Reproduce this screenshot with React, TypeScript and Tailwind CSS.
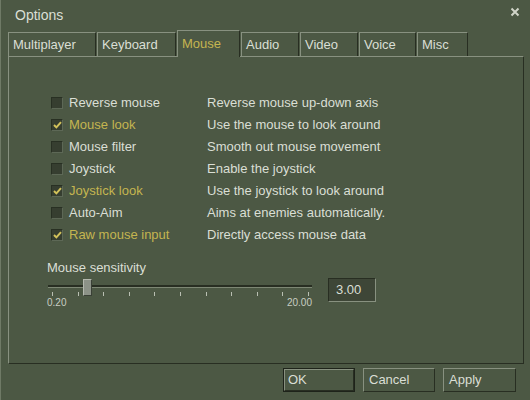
import React from "react";

const tabs = [
  { name: "Multiplayer", w: "w-[88px]" },
  { name: "Keyboard", w: "w-[79px]" },
  { name: "Mouse", w: "w-[63px]", active: true },
  { name: "Audio", w: "w-[58px]" },
  { name: "Video", w: "w-[58px]" },
  { name: "Voice", w: "w-[57px]" },
  { name: "Misc", w: "w-[51px]" },
];

const rows = [
  { label: "Reverse mouse", desc: "Reverse mouse up-down axis", on: false },
  { label: "Mouse look", desc: "Use the mouse to look around", on: true },
  { label: "Mouse filter", desc: "Smooth out mouse movement", on: false },
  { label: "Joystick", desc: "Enable the joystick", on: false },
  { label: "Joystick look", desc: "Use the joystick to look around", on: true },
  { label: "Auto-Aim", desc: "Aims at enemies automatically.", on: false },
  { label: "Raw mouse input", desc: "Directly access mouse data", on: true },
];

function Check({ on }: { on: boolean }) {
  return (
    <div className="w-[12px] h-[12px] shrink-0 bg-[#363e30] border border-t-[#283023] border-l-[#283023] border-r-[#5d6856] border-b-[#5d6856] flex items-center justify-center">
      {on && (
        <svg width="9" height="8" viewBox="0 0 9 8">
          <path d="M1 4 L3.4 6.4 L8 1.2" stroke="#d2c25a" strokeWidth="2" fill="none" />
        </svg>
      )}
    </div>
  );
}

export default function App() {
  const ticks = Array.from({ length: 11 });
  return (
    <div
      className="w-[530px] h-[400px] bg-[#4c5844] flex flex-col text-[#dadfd5] border-l border-l-[#6f7a66] overflow-hidden"
      style={{ fontFamily: '"Liberation Sans", Arial, sans-serif' }}
    >
      <div className="h-[30px] flex items-center justify-between pl-[14px] pr-[10px]">
        <span className="text-[14px] leading-none">Options</span>
        <svg width="10" height="10" viewBox="0 0 10 10" className="mb-[6px]">
          <path d="M1.5 1.5 L8.5 8.5 M8.5 1.5 L1.5 8.5" stroke="#d0d4c8" strokeWidth="2" />
        </svg>
      </div>
      <div className="h-[26px] flex items-end gap-[1px] pl-[7px]">
        {tabs.map((t) =>
          t.active ? (
            <div
              key={t.name}
              className={`${t.w} h-[27px] -mb-px relative z-10 bg-[#4c5844] border-t border-l border-r border-t-[#889180] border-l-[#889180] border-r-[#282e22] pl-[4px] flex items-center text-[13px] text-[#c4b550]`}
            >
              {t.name}
            </div>
          ) : (
            <div
              key={t.name}
              className={`${t.w} h-[24px] border-t border-l border-r border-t-[#889180] border-l-[#889180] border-r-[#282e22] pl-[4px] flex items-center text-[13px]`}
            >
              {t.name}
            </div>
          )
        )}
      </div>
      <div className="ml-[7px] w-[516px] h-[308px] border border-t-[#889180] border-l-[#889180] border-r-[#282e22] border-b-[#282e22] pt-[35px] pl-[38px] flex flex-col">
        <div className="flex flex-col pl-[4px]">
          {rows.map((r) => (
            <div key={r.label} className="h-[22px] flex items-center text-[13px]">
              <div className="w-[156px] flex items-center gap-[6px]">
                <Check on={r.on} />
                <span className={r.on ? "text-[#c4b550]" : ""}>{r.label}</span>
              </div>
              <span>{r.desc}</span>
            </div>
          ))}
        </div>
        <div className="mt-[14px] flex items-start">
          <div className="w-[265px] flex flex-col">
            <div className="h-[16px] text-[13px] leading-[16px]">Mouse sensitivity</div>
            <div className="h-[21px] relative">
              <div className="absolute left-[1px] right-0 top-[9px] h-[3px] bg-[#282e22] border-b border-b-[#7d8774]" />
              <div className="absolute left-[36px] top-[3px] w-[9px] h-[17px] bg-[#8c9287] border border-t-[#b4b8ae] border-l-[#b4b8ae] border-r-[#3a4036] border-b-[#3a4036]" />
              <div className="absolute left-[5px] right-[3px] top-[16px] h-[4px] flex justify-between">
                {ticks.map((_, i) => (
                  <div key={i} className="w-px h-[4px] bg-[#b9bfb2]" />
                ))}
              </div>
            </div>
            <div className="h-[12px] flex justify-between text-[10px] leading-[12px] text-[#c8cdc2]">
              <span>0.20</span>
              <span>20.00</span>
            </div>
          </div>
          <div className="ml-[16px] mt-[18px] w-[48px] h-[24px] bg-[#3e4637] border border-t-[#282e22] border-l-[#282e22] border-r-[#889180] border-b-[#889180] flex items-center pl-[7px] text-[13px]">
            3.00
          </div>
        </div>
      </div>
      <div className="mt-[4px] flex justify-end gap-[8px] pr-[14px]">
        <div className="w-[72px] h-[24px] border border-[#1e231a] flex">
          <div className="flex-1 border border-t-[#889180] border-l-[#889180] border-r-[#282e22] border-b-[#282e22] flex items-center pl-[3px] text-[13px]">
            OK
          </div>
        </div>
        <div className="w-[72px] h-[24px] border border-t-[#889180] border-l-[#889180] border-r-[#282e22] border-b-[#282e22] flex items-center pl-[5px] text-[13px]">
          Cancel
        </div>
        <div className="w-[73px] h-[24px] border border-t-[#889180] border-l-[#889180] border-r-[#282e22] border-b-[#282e22] flex items-center pl-[5px] text-[13px]">
          Apply
        </div>
      </div>
    </div>
  );
}
